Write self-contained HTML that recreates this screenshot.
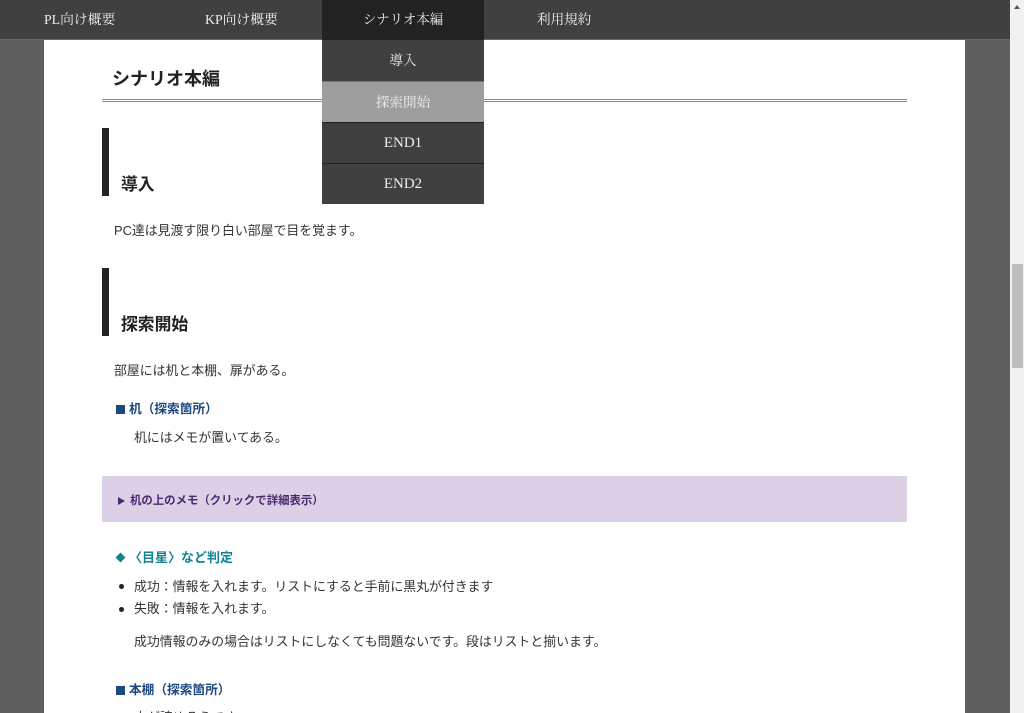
<!DOCTYPE html>
<html lang="ja">
<head>
<meta charset="utf-8">
<title>シナリオ本編</title>
<style>
html,body{margin:0;padding:0;width:1024px;height:713px;overflow:hidden;background:#5f5f5f}
body{position:relative;font-family:"Liberation Sans","Noto Sans CJK JP",sans-serif;color:#333}
.a{position:absolute;white-space:nowrap}
#main{position:absolute;left:44px;top:0;width:921px;height:713px;background:#fff}
#nav{position:absolute;left:0;top:0;width:1010px;height:39px;background:#404040;border-bottom:1px solid #6a6a6a}
.n{position:absolute;top:0;height:39px;line-height:40px;font-family:"Liberation Serif","Noto Serif CJK JP",serif;font-size:13.8px;color:#eee;white-space:nowrap}
.m{position:absolute;left:322px;width:162px;text-align:center;font-family:"Liberation Serif","Noto Serif CJK JP",serif;font-size:13.6px;color:#eee;background:#404040}
.bar{position:absolute;left:102px;width:7px;height:68px;background:#222}
.h3{position:absolute;left:121px;font-size:16.8px;font-weight:bold;color:#222;line-height:24px;white-space:nowrap}
.p{position:absolute;font-size:12.88px;line-height:20px;color:#333;white-space:nowrap}
.h5{position:absolute;left:116px;font-size:12.7px;font-weight:bold;line-height:20px;color:#1c4a80;white-space:nowrap}
.sq{position:absolute;left:0;top:6px;width:9px;height:9px;background:#1c4a80}
.h5 b{margin-left:13px;font-weight:bold}
#sb{position:absolute;left:1010px;top:0;width:14px;height:713px;background:#f1f1f1;border-left:0}
</style>
</head>
<body>
<div id="main"></div>

<div class="a" style="left:112px;top:66px;font-size:18px;font-weight:bold;line-height:26px;color:#222">シナリオ本編</div>
<div class="a" style="left:102px;top:99px;width:805px;height:1px;border-top:1px solid #888;border-bottom:1px solid #888;background:#fff"></div>

<div class="bar" style="top:128px"></div>
<div class="h3" style="top:173px">導入</div>
<div class="p" style="left:114px;top:221px">PC達は見渡す限り白い部屋で目を覚ます。</div>

<div class="bar" style="top:268px"></div>
<div class="h3" style="top:313px">探索開始</div>
<div class="p" style="left:114px;top:361px">部屋には机と本棚、扉がある。</div>

<div class="h5" style="top:399px"><i class="sq"></i><b>机（探索箇所）</b></div>
<div class="p" style="left:134px;top:428px">机にはメモが置いてある。</div>

<div class="a" style="left:102px;top:476px;width:805px;height:46px;background:#dcd0e6"></div>
<div class="a" style="left:118px;top:497px;width:0;height:0;border-left:7px solid #4a2a6e;border-top:4px solid transparent;border-bottom:4px solid transparent"></div>
<div class="a" style="left:130px;top:492px;font-size:11.4px;font-weight:bold;line-height:19px;color:#4a2a6e">机の上のメモ（クリックで詳細表示）</div>

<div class="a" style="left:117px;top:554px;width:7px;height:7px;background:#0f8490;transform:rotate(45deg)"></div>
<div class="a" style="left:129px;top:548px;font-size:13px;font-weight:bold;line-height:20px;color:#0f8490">〈目星〉など判定</div>

<div class="a" style="left:119px;top:584px;width:5px;height:5px;border-radius:50%;background:#222"></div>
<div class="p" style="left:134px;top:577px">成功：情報を入れます。リストにすると手前に黒丸が付きます</div>
<div class="a" style="left:119px;top:607px;width:5px;height:5px;border-radius:50%;background:#222"></div>
<div class="p" style="left:134px;top:599px">失敗：情報を入れます。</div>
<div class="p" style="left:134px;top:632px">成功情報のみの場合はリストにしなくても問題ないです。段はリストと揃います。</div>

<div class="h5" style="top:680px"><i class="sq"></i><b>本棚（探索箇所）</b></div>
<div class="p" style="left:134px;top:708px">本が読めそうです。</div>

<div id="nav"></div>
<div class="n" style="left:44px">PL向け概要</div>
<div class="n" style="left:205px">KP向け概要</div>
<div class="a" style="left:322px;top:0;width:162px;height:40px;background:#222"></div>
<div class="n" style="left:322px;width:162px;text-align:center;font-size:13.4px">シナリオ本編</div>
<div class="n" style="left:537px;font-size:13.6px">利用規約</div>

<div class="m" style="top:40px;height:41px;line-height:42px">導入</div>
<div class="m" style="top:81px;height:41px;line-height:41px;background:#9e9e9e;border-top:1px solid #777;box-sizing:border-box">探索開始</div>
<div class="m" style="top:122px;height:41px;line-height:41px;border-top:1px solid #222;box-sizing:border-box;font-size:15px">END1</div>
<div class="m" style="top:163px;height:41px;line-height:41px;border-top:1px solid #222;box-sizing:border-box;font-size:15px">END2</div>

<div id="sb"></div>
<div class="a" style="left:1012px;top:264px;width:11px;height:104px;background:#bdbdbd"></div>
<div class="a" style="left:1014px;top:5px;width:0;height:0;border-left:3.5px solid transparent;border-right:3.5px solid transparent;border-bottom:4px solid #555"></div>
</body>
</html>
